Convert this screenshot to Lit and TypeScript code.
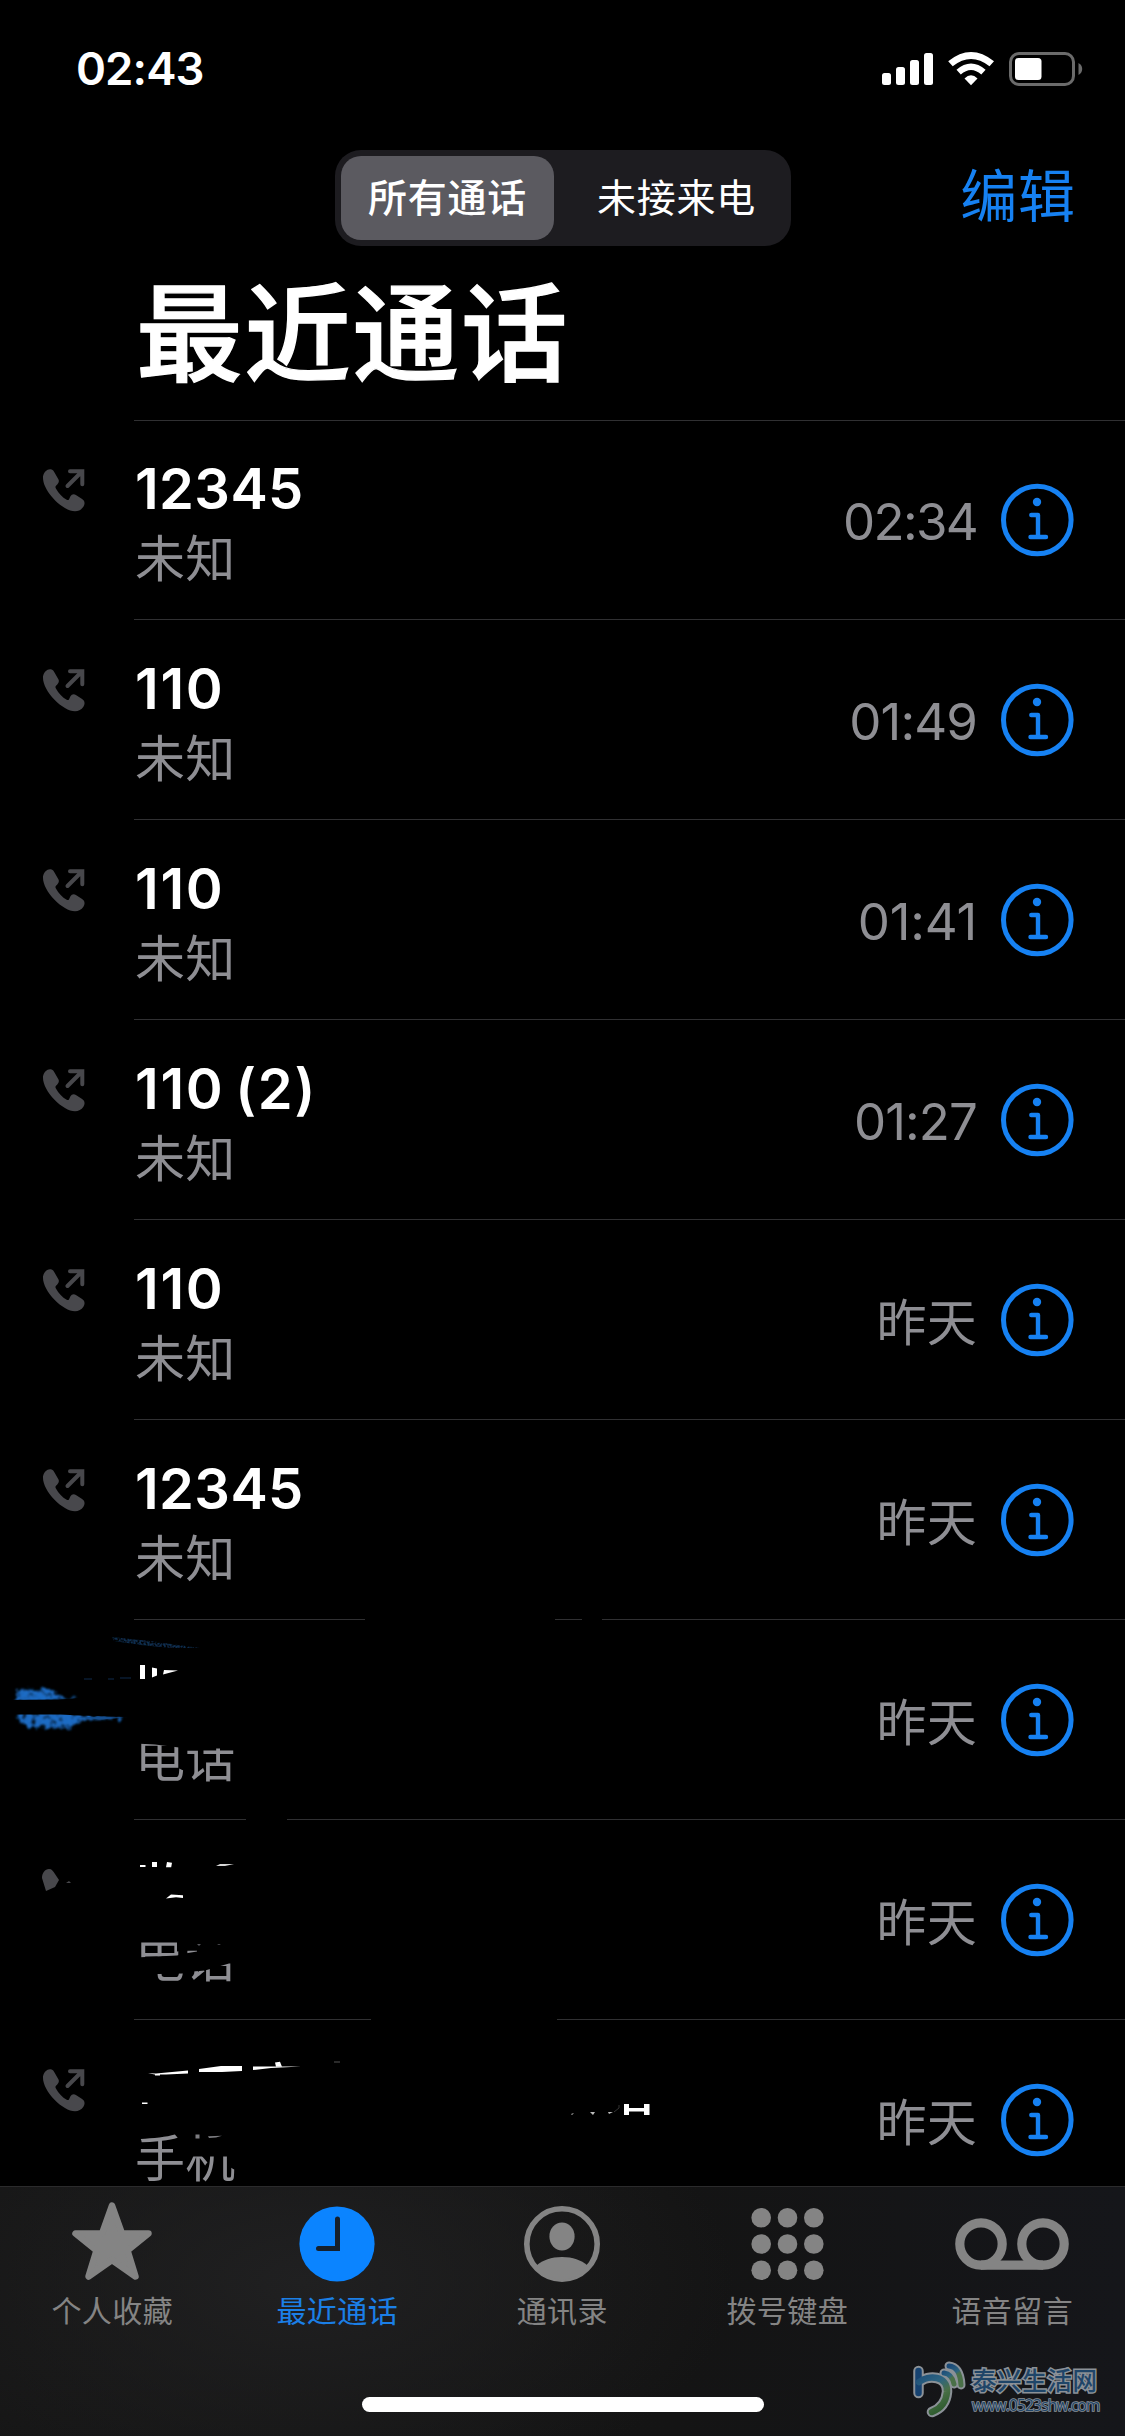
import { LitElement, html, css, svg, nothing } from "lit";
import { customElement, property } from "lit/decorators.js";

interface Call {
  name: string;
  label: string;
  when: string;
  icon: boolean;
  smudge?: number;
}

const CALLS: Call[] = [
  { name: "12345", label: "未知", when: "02:34", icon: true },
  { name: "110", label: "未知", when: "01:49", icon: true },
  { name: "110", label: "未知", when: "01:41", icon: true },
  { name: "110 (2)", label: "未知", when: "01:27", icon: true },
  { name: "110", label: "未知", when: "昨天", icon: true },
  { name: "12345", label: "未知", when: "昨天", icon: true },
  { name: "", label: "电话", when: "昨天", icon: false, smudge: 1 },
  { name: "", label: "电话", when: "昨天", icon: false, smudge: 2 },
  { name: "", label: "手机", when: "昨天", icon: true, smudge: 3 },
];

/* Scribbled-over rows: what is left visible, in row coordinates (1125 x 200). */
const SMUDGES: Record<number, unknown> = {
  1: svg`
    <defs>
      <filter id="rough" x="-5%" y="-30%" width="110%" height="160%">
        <feTurbulence type="fractalNoise" baseFrequency="0.22" numOctaves="3" seed="4" result="n" />
        <feDisplacementMap in="SourceGraphic" in2="n" scale="11" xChannelSelector="R" yChannelSelector="G" result="d" />
        <feColorMatrix in="n" type="matrix" values="0 0 0 0 0  0 0 0 0 0  0 0 0 0 0  0 0 3 0 -0.4" result="a" />
        <feComposite in="d" in2="a" operator="in" result="c" />
        <feGaussianBlur in="c" stdDeviation="0.9" />
      </filter>
      <filter id="grain" x="-5%" y="-30%" width="110%" height="160%">
        <feTurbulence type="fractalNoise" baseFrequency="0.5" numOctaves="2" seed="7" result="n" />
        <feColorMatrix in="n" type="matrix" values="0 0 0 0 0  0 0 0 0 0  0 0 0 0 0  0 3.4 0 0 -1.1" result="a" />
        <feComposite in="SourceGraphic" in2="a" operator="in" />
      </filter>
    </defs>
    <path d="M365-1H555M582-1H602M246 199.500H287" stroke="#000" stroke-width="3" />
    <path d="M112 17 L150 21 L200 28 L172 28 L140 25 L114 21Z" fill="#0f2d4e" filter="url(#grain)" />
    <path d="M84 59h8M108 59h6M120 58h11" stroke="#0a1c33" stroke-width="1.500" />
    <path d="M16 70 L54 69 L56 76 L77 78 L60 82 L16 82Z" fill="#1c6cc4" filter="url(#rough)" />
    <path d="M17 93 L60 93 L98 96 L130 97.500 L98 100 L80 101 L70 109 L58 108 L40 108 L28 107 L19 101Z" fill="#1c6cc4" filter="url(#rough)" />
    <path d="M0 80 L60 79.500 L80 78 L100 80 L130 97 L80 95.500 L60 94.500 L0 94.500Z" fill="#000" />
    <path d="M78 97.500 L100 97 L124 97.500 L102 99.500Z" fill="#164f90" />
    <path d="M140 45h5v14h-5zM152 47.500l5 1v7l-5 2zM164 50l14 .5-15 4z" fill="#fff" />
  `,
  2: svg`
    <path d="M42 58c0-5 3-9 7-9 3 0 4 2 6 5l4 6-4 7-9 4z" fill="#48484c" />
    <path d="M66 63l3-2 2 2z" fill="#48484c" />
    <path d="M140 45h5.500v2h-5.500zM152 42h5v5h-5zM167 42l5 .8-.8 4.400h-5.200zM166 78.500l5-4 12 .8v2.600l-7-.6z" fill="#fff" />
    <path d="M216 46l4-2h14l-9 2z" fill="#d8d8d8" />
    <path d="M197 124h4l-2 2zM217 124h4l-2 1z" fill="#55555a" />
    <path d="M371 199.500H557" stroke="#000" stroke-width="3" />
  `,
  3: svg`
    <path d="M371-1H557" stroke="#000" stroke-width="3" />
    <path d="M148 53.300l8 .2 32-3v3l-22 1h-6v1h-5v-1zM199 49l22-3h21v5l-20 1h-23zM253 46.500h22l26 0-30 1.500-18 2z" fill="#fff" />
    <path d="M275 42.500l5-.8 2 5h-6zM142 82.500h5.500v1.500h-5.500z" fill="#fff" />
    <path d="M334 42h6" stroke="#555" />
    <path d="M571 94l3-1-2 2zM590 92h5l-2 3zM608 92h5l-4 2z" fill="#bbb" />
    <path d="M614 92l5-4v-3" stroke="#333" fill="none" />
    <path d="M624 84h5v4h15v-4h5.500v11h-5.500v-3.500h-15v3.500h-5z" fill="#fff" />
    <path d="M195.500 114.500h4v4h-4zM208 116.300l14-.6-6 1.800-7 .6z" fill="#7c7c80" />
  `,
};

const phoneIcon = svg`
  <path d="M1 7.500C2 3 5 0 8.500 .3c1.600.1 2.700 1.100 3.700 2.700l4.300 7.500c1 2-.2 4.200-2.300 6.100-1 .9-.9 1.700-.3 2.900 2.700 5 6.400 8.700 10.800 11.300 1 .5 1.600.3 2.300-.4l1.300-2.900c1.500-2.300 3.400-3 5.600-1.600l6.200 4.200c3 2 3 4.700 1.300 7.700C39.500 40.600 36.500 42.300 33 42.300 21 42.300 0 22 1 7.500z" fill="#48484c" />
  <path d="M25.500 17 39 3.500M28 2.200h12.300v13" fill="none" stroke="#48484c" stroke-width="4" stroke-linecap="round" stroke-linejoin="miter" />
`;

@customElement("call-row")
class CallRow extends LitElement {
  @property({ attribute: false }) call!: Call;
  @property({ type: Boolean }) first = false;

  static styles = css`
    :host { display: block; }
    .row { position: relative; height: 200px; display: flex; box-sizing: border-box; }
    .lead { width: 134px; flex: none; padding: 49px 0 0 41.500px; box-sizing: border-box; }
    .lead svg { display: block; }
    .main { flex: 1; display: flex; box-sizing: border-box; border-bottom: 1px solid #303032; }
    .top .main { border-top: 1px solid #303032; }
    .top .body { margin-top: -1px; }
    .top .side { margin-top: -1px; }
    .body { flex: 1; padding: 34px 0 0 1px; }
    .name { height: 70px; line-height: 70px; font-size: 56px; font-weight: 600; color: #fff; letter-spacing: 0.4px; white-space: pre; font-kerning: none; }
    .name.wide { letter-spacing: 1.700px; word-spacing: -5px; }
    .label { height: 52px; line-height: 52px; margin-top: 8.500px; font-size: 50px; letter-spacing: 0.2px; color: #8e8e93; font-weight: 400; }
    .l1 { clip-path: polygon(0 11px, 20px 12px, 36px 14px, 52px 16px, 110px 16px, 110px 100%, 0 100%); }
    .l2 { clip-path: polygon(0 10px, 42px 10px, 42px 19px, 50px 18px, 62px 17px, 62px 19px, 50px 21px, 42px 23px, 0 25px, 0 42px, 48px 41px, 58px 39px, 70px 38px, 94px 31px, 110px 31px, 110px 100%, 0 100%); }
    .l3 { clip-path: polygon(0 0, 43px 0, 43px 7px, 38px 14px, 38px 22px, 44px 24px, 110px 24px, 110px 100%, 0 100%); }
    .side { display: flex; gap: 23px; align-items: flex-start; padding-right: 51px; }
    .when { height: 66px; line-height: 66px; margin-top: 69px; font-size: 51px; letter-spacing: -1.700px; color: #8e8e93; }
    .ones1 { letter-spacing: -0.900px; }
    .ones2 { letter-spacing: -0.200px; }
    .cjk { font-size: 50px; letter-spacing: 0.2px; margin-top: 70px; }
    .info { display: block; margin-top: 63px; }
    .ink { position: absolute; left: 0; top: 0; overflow: visible; }
  `;

  render() {
    const c = this.call;
    const s = c.smudge;
    const ones = c.when.split("1").length - 1;
    return html`
      <div class="row ${this.first ? "top" : ""}">
        <div class="lead">
          ${c.icon ? html`<svg width="43" height="43" viewBox="0 0 43 43">${phoneIcon}</svg>` : nothing}
        </div>
        <div class="main">
          <div class="body">
            <div class="name ${c.name.startsWith("11") ? "wide" : ""}">${c.name}</div>
            <div class="label ${s ? `l${s}` : ""}">${c.label}</div>
          </div>
          <div class="side">
            <div class="when ${c.when.includes(":") ? `ones${ones}` : "cjk"}">${c.when}</div>
            <svg class="info" width="74" height="74" viewBox="0 0 74 74" fill="none" stroke="#1681f2">
              <circle cx="37.300" cy="37" r="33.800" stroke-width="5" />
              <circle cx="37" cy="19" r="4.200" fill="#1681f2" stroke="none" />
              <path d="M31.300 32h6.700V54M30.500 54h15.500" stroke-width="4.400" stroke-linecap="round" stroke-linejoin="round" />
            </svg>
          </div>
        </div>
        ${s ? html`<svg class="ink" width="1125" height="166" viewBox="0 0 1125 166">${SMUDGES[s]}</svg>` : nothing}
      </div>
    `;
  }
}

const TABS = [
  {
    text: "个人收藏",
    on: false,
    icon: svg`<path d="M50 11.500 60 39.500H86.500L65.500 56.500 73.500 82.500 50 66 26.500 82.500 34.500 56.500 13.500 39.500H40Z" fill="#848484" stroke="#848484" stroke-width="6.500" stroke-linejoin="round" />`,
  },
  {
    text: "最近通话",
    on: true,
    icon: svg`<circle cx="50" cy="50" r="37.600" fill="#0b84ff" /><path d="M50.500 25v29.500H31.500" fill="none" stroke="#16202c" stroke-width="5" stroke-linecap="round" />`,
  },
  {
    text: "通讯录",
    on: false,
    icon: svg`<circle cx="50" cy="50" r="35.200" fill="none" stroke="#848484" stroke-width="5.600" />
      <ellipse cx="50" cy="42.500" rx="12.600" ry="14" fill="#848484" />
      <path d="M24.500 71.500C31 66 39 63 50 63s19 3 25.500 8.500C69 81 60 85.500 50 85.500S31 81 24.500 71.500Z" fill="#848484" />`,
  },
  {
    text: "拨号键盘",
    on: false,
    icon: svg`${[23.700, 50, 76.300].map((y) => [23.700, 50, 76.300].map((x) => svg`<circle cx=${x + 0.5} cy=${y} r="9.800" fill="#848484" />`))}`,
  },
  {
    text: "语音留言",
    on: false,
    icon: svg`<g fill="none" stroke="#848484" stroke-width="9.200"><circle cx="19" cy="50" r="21.200" /><circle cx="81" cy="50" r="21.200" /><path d="M19 71.200H81" /></g>`,
  },
];

@customElement("app-root")
class AppRoot extends LitElement {
  static styles = css`
    :host { display: block; width: 1125px; height: 2436px; overflow: hidden; background: #000; color: #fff; font-family: Inter, "Noto Sans CJK SC", sans-serif; }
    .screen { display: flex; flex-direction: column; height: 2436px; }
    .status { height: 150px; flex: none; display: flex; justify-content: space-between; align-items: flex-start; box-sizing: border-box; padding: 41px 42px 0 76px; }
    .clock { height: 56px; line-height: 56px; font-size: 45.500px; font-weight: 600; letter-spacing: -0.9px; }
    .glyphs { margin-top: 9px; }
    .nav { height: 96px; flex: none; display: grid; grid-template-columns: 335px 456px 1fr; }
    .segment { grid-column: 2; background: #1d1c20; border-radius: 26px; padding: 6px; display: flex; box-sizing: border-box; }
    .seg { flex: 1; line-height: 84px; text-align: center; font-size: 39px; letter-spacing: 0.7px; }
    .seg.on { flex: 0 0 213px; background: #5b5a60; border-radius: 20px; font-weight: 500; }
    .seg.off { padding-left: 14px; }
    .edit { color: #1681f2; text-align: right; font-size: 57px; letter-spacing: 0.6px; line-height: 93px; padding-right: 49.500px; }
    .title { margin: 0; height: 174px; flex: none; line-height: 177px; font-size: 106.500px; letter-spacing: 1.800px; padding-left: 136px; font-weight: 500; -webkit-text-stroke: 1.300px #fff; }
    .list { flex: 1; min-height: 0; overflow: hidden; }
    .bar { height: 250px; flex: none; position: relative; box-sizing: border-box; border-top: 1px solid #2b2b2c; display: flex; flex-direction: column;
      background: radial-gradient(ellipse 430px 230px at 27% 38%, #202021, rgba(32, 32, 33, 0)), linear-gradient(90deg, #161616, #141414 60%, #15161a); }
    .tabs { display: grid; grid-template-columns: repeat(5, 1fr); margin-left: -1px; margin-right: 1px; }
    .tab { display: flex; flex-direction: column; align-items: center; padding-top: 7px; color: #848484; font-size: 30px; letter-spacing: 0.4px; line-height: 44px; }
    .tab svg { display: block; overflow: visible; margin-bottom: -5px; }
    .tab span { padding-left: 1.500px; }
    .tab.on { color: #1b7fe6; }
    .home { width: 402px; height: 15px; border-radius: 8px; background: #fff; margin: 64px auto 0; }
    .mark { position: absolute; left: 912px; top: 174px; display: flex; gap: 3px; }
    .site { display: flex; flex-direction: column; color: #1f4568; paint-order: stroke fill; -webkit-text-stroke: 3px #8b9197; white-space: nowrap; }
    .cn { font-size: 24.500px; line-height: 34px; letter-spacing: 0.6px; font-weight: 500; margin-top: 2px; font-family: "Noto Sans CJK SC", sans-serif; }
    .url { font: 500 15.500px/17px "Open Sans", sans-serif; letter-spacing: -0.800px; -webkit-text-stroke-width: 1.600px; }
  `;

  render() {
    return html`
      <div class="screen">
        <div class="status">
          <div class="clock">02:43</div>
          <svg class="glyphs" width="203" height="40" viewBox="880 50 203 40">
            <g fill="#fff">
              <rect x="882" y="73" width="9" height="12" rx="2.500" />
              <rect x="896" y="67" width="9" height="18" rx="2.500" />
              <rect x="910" y="60" width="9" height="25" rx="2.500" />
              <rect x="924" y="53" width="9" height="32" rx="2.500" />
              <path d="M971 85.300 964.500 78.600Q971 72 977.500 78.600Z" />
              <path d="M948.200 61.300Q971 42.700 994 61.300L989.500 66.300Q971 51.700 952.700 66.300Z" />
              <path d="M956.500 69.700Q971 57.300 985.600 69.700L981.300 74.500Q971 65.300 960.800 74.500Z" />
              <rect x="1015" y="58" width="26.500" height="22" rx="3.500" />
            </g>
            <rect x="1010.500" y="53.500" width="63" height="31" rx="8.500" fill="none" stroke="#6b6b6b" stroke-width="3" />
            <path d="M1078.500 63q3.700 2.200 3.700 6t-3.700 6z" fill="#6b6b6b" />
          </svg>
        </div>
        <div class="nav">
          <div class="segment">
            <div class="seg on">所有通话</div>
            <div class="seg off">未接来电</div>
          </div>
          <div class="edit">编辑</div>
        </div>
        <h1 class="title">最近通话</h1>
        <div class="list">
          ${CALLS.map((c, i) => html`<call-row .call=${c} ?first=${i === 0}></call-row>`)}
        </div>
        <div class="bar">
          <div class="tabs">
            ${TABS.map(
              (t) => html`<div class="tab ${t.on ? "on" : ""}">
                <svg width="100" height="100" viewBox="0 0 100 100">${t.icon}</svg>
                <span>${t.text}</span>
              </div>`
            )}
          </div>
          <div class="home"></div>
          <div class="mark">
            <svg width="57" height="57" viewBox="0 0 57 57" fill="none" stroke-linecap="round">
              <defs>
                <linearGradient id="mg" gradientUnits="userSpaceOnUse" x1="10" y1="8" x2="34" y2="48">
                  <stop offset="0" stop-color="#1a4a78" /><stop offset=".4" stop-color="#2d6480" /><stop offset=".65" stop-color="#4a7048" /><stop offset="1" stop-color="#2c5a2c" />
                </linearGradient>
                <linearGradient id="mw" gradientUnits="userSpaceOnUse" x1="36" y1="6" x2="46" y2="22">
                  <stop offset="0" stop-color="#1a4a78" /><stop offset=".45" stop-color="#2d6480" /><stop offset=".6" stop-color="#4a7048" /><stop offset="1" stop-color="#4a7048" />
                </linearGradient>
              </defs>
              <g stroke="#8b9197">
                <path d="M6.500 10V32M7 21C16 14 36 14 35 31 34 42 28 48 20 51" stroke-width="10.500" />
                <path d="M37 5Q48 6 49 24M32 12Q40 13 42 23" stroke-width="9" />
              </g>
              <path d="M6.500 10V32" stroke="#164270" stroke-width="6.500" />
              <path d="M7 21C16 14 36 14 35 31 34 42 28 48 20 51" stroke="url(#mg)" stroke-width="6.500" />
              <path d="M37 5Q48 6 49 24M32 12Q40 13 42 23" stroke="url(#mw)" stroke-width="5" />
            </svg>
            <div class="site"><span class="cn">泰兴生活网</span><span class="url">www.0523shw.com</span></div>
          </div>
        </div>
      </div>
    `;
  }
}
